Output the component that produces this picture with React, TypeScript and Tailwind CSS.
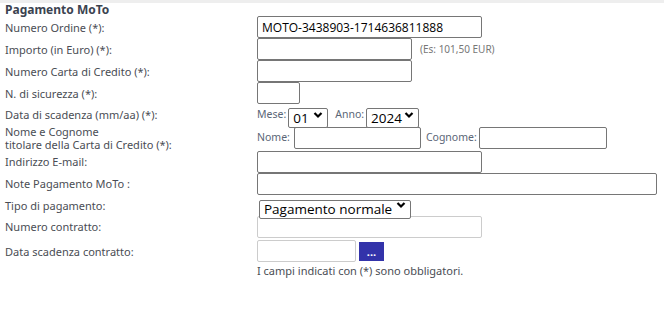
import React from 'react'

const font = { fontFamily: '"Noto Sans", "Open Sans", Arial, sans-serif' }

function Row({ label, h, children }: { label: React.ReactNode; h: string; children?: React.ReactNode }) {
  return (
    <div className={`flex items-center ${h}`}>
      <div className="w-[257px] shrink-0 pl-[5px] text-[11px] leading-[13px] text-[#4a4d54]">{label}</div>
      <div className="flex items-center">{children}</div>
    </div>
  )
}

function Select({ value, w, h = 'h-[20px]', extra = '' }: { value: string; w: string; h?: string; extra?: string }) {
  return (
    <div className={`relative ${w} ${h} ${extra}`}>
      <select
        className="appearance-none w-full h-full border border-[#767676] rounded-[2px] bg-white text-[13.5px] leading-[17px] text-black pl-[4px] outline-none"
        style={{ fontFamily: '"Open Sans", Arial, sans-serif' }}
        defaultValue={value}
      >
        <option>{value}</option>
      </select>
      <svg className="absolute right-[5px] top-1/2 -translate-y-1/2 pointer-events-none" width="10" height="7" viewBox="0 0 10 7">
        <polyline points="1.5,1.5 5,5 8.5,1.5" fill="none" stroke="black" strokeWidth="2.2" />
      </svg>
    </div>
  )
}

const inputCls =
  'h-[22px] border border-[#767676] rounded-[2px] bg-white px-[4px] text-[12px] text-black outline-none'
const inlineLabel = 'text-[10.5px] text-[#5b6677]'

export default function App() {
  return (
    <div className="w-[664px] h-[321px] bg-white" style={font}>
      <div className="h-[3px] bg-[#eeeeee]" />
      <div className="h-[13px] flex items-center pl-[5px] text-[12px] font-bold text-[#3b4350]">
        Pagamento MoTo
      </div>
      <Row label="Numero Ordine (*):" h="h-[22px]">
        <input className={`${inputCls} w-[225px]`} defaultValue="MOTO-3438903-1714636811888" style={{ fontFamily: '"Open Sans", Arial, sans-serif' }} />
      </Row>
      <Row label="Importo (in Euro) (*):" h="h-[22px]">
        <input className={`${inputCls} w-[155px]`} />
        <span className="ml-[8px] text-[10px] text-[#777777]">(Es: 101,50 EUR)</span>
      </Row>
      <Row label="Numero Carta di Credito (*):" h="h-[22px]">
        <input className={`${inputCls} w-[155px]`} />
      </Row>
      <Row label="N. di sicurezza (*):" h="h-[22px]">
        <input className={`${inputCls} w-[43px]`} />
      </Row>
      <Row label="Data di scadenza (mm/aa) (*):" h="h-[21px]">
        <span className={`${inlineLabel} mr-[2px]`}>Mese:</span>
        <Select value="01" w="w-[40px]" />
        <span className={`${inlineLabel} ml-[7px] mr-[2px]`}>Anno:</span>
        <Select value="2024" w="w-[53px]" />
      </Row>
      <Row
        label={
          <>
            <div>Nome e Cognome</div>
            <div>titolare della Carta di Credito (*):</div>
          </>
        }
        h="h-[26px]"
      >
        <span className={`${inlineLabel} mr-[4px]`}>Nome:</span>
        <input className={`${inputCls} w-[127px]`} />
        <span className={`${inlineLabel} ml-[5px] mr-[2px]`}>Cognome:</span>
        <input className={`${inputCls} w-[128px]`} />
      </Row>
      <Row label="Indirizzo E-mail:" h="h-[21px]">
        <input className={`${inputCls} w-[225px]`} />
      </Row>
      <Row label="Note Pagamento MoTo :" h="h-[23px]">
        <input className={`${inputCls} w-[400px]`} />
      </Row>
      <Row label="Tipo di pagamento:" h="h-[20px]">
        <Select value="Pagamento normale" w="w-[152px]" h="h-[19px]" extra="ml-[2px]" />
      </Row>
      <Row label="Numero contratto:" h="h-[23px]">
        <input className={`${inputCls} w-[225px] bg-[#f7f7f7] border-[#cccccc]`} disabled />
      </Row>
      <Row label="Data scadenza contratto:" h="h-[26px]">
        <input className={`${inputCls} w-[99px] bg-[#f7f7f7] border-[#cccccc]`} disabled />
        <button className="ml-[3px] w-[25px] h-[19px] bg-[#3333aa] text-white text-[11px] font-bold leading-[15px]">
          ...
        </button>
      </Row>
      <div className="pl-[257px] text-[11px] leading-[13px] text-[#4a4d54]">
        I campi indicati con (*) sono obbligatori.
      </div>
    </div>
  )
}
